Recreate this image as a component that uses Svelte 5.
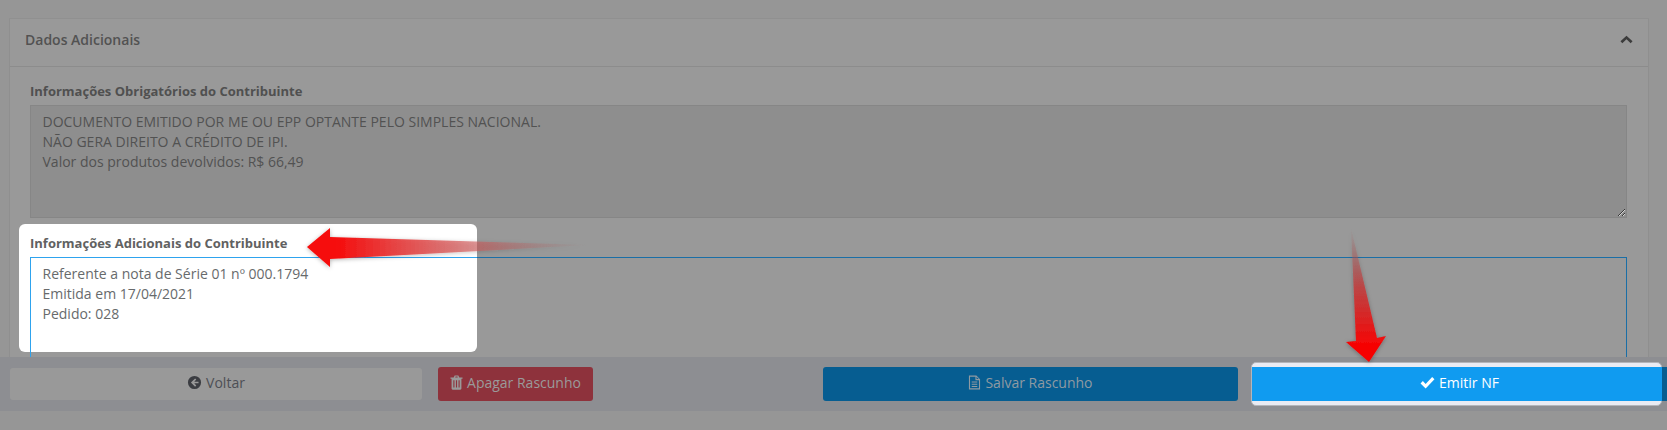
<script>
    const obrigatorias = [
        "DOCUMENTO EMITIDO POR ME OU EPP OPTANTE PELO SIMPLES NACIONAL.",
        "NÃO GERA DIREITO A CRÉDITO DE IPI.",
        "Valor dos produtos devolvidos: R$ 66,49",
    ];
    const adicionais = [
        "Referente a nota de Série 01 nº 000.1794",
        "Emitida em 17/04/2021",
        "Pedido: 028",
    ];
</script>

<div class="page">
    <section class="card">
        <header class="card-head">
            <span class="card-title">Dados Adicionais</span>
            <svg class="chevron" viewBox="0 0 14 9" width="13" height="9">
                <path d="M7 0.5 L13.5 6.5 L11.5 8.5 L7 4.2 L2.5 8.5 L0.5 6.5 Z" />
            </svg>
        </header>
        <div class="card-body">
            <div class="field">
                <div class="label">Informações Obrigatórios do Contribuinte</div>
                <div class="area disabled">
                    {#each obrigatorias as line}
                        <div>{line}</div>
                    {/each}
                </div>
            </div>
            <div class="field highlighted">
                <div class="spot"></div>
                <div class="label">Informações Adicionais do Contribuinte</div>
                <div class="area focused">
                    {#each adicionais as line}
                        <div>{line}</div>
                    {/each}
                </div>
            </div>
        </div>
    </section>

    <footer class="actions">
        <button class="btn voltar">
            <svg class="icon" viewBox="0 0 16 16" width="15" height="15">
                <path fill-rule="evenodd" d="M8 1a7 7 0 1 1 0 14A7 7 0 0 1 8 1Zm.6 2.6L4.2 8l4.4 4.4 1.3-1.3-2.2-2.2h4.6V7.1H7.7l2.2-2.2Z" />
            </svg>
            Voltar
        </button>
        <button class="btn apagar">
            <svg class="icon" viewBox="0 0 14 16" width="13" height="15">
                <path fill-rule="evenodd" d="M5 0.5h4l1 2h3.5v1.5h-1.2v10.5a1.2 1.2 0 0 1-1.2 1.2H2.9a1.2 1.2 0 0 1-1.2-1.2V4H0.5V2.5H4ZM5.6 2.5h2.8L8 1.6H6ZM3.6 5.5v8h1.2v-8Zm2.8 0v8h1.2v-8Zm2.8 0v8h1.2v-8Z" />
            </svg>
            Apagar Rascunho
        </button>
        <button class="btn salvar">
            <svg class="icon" viewBox="0 0 14 16" width="13" height="15">
                <path fill-rule="evenodd" d="M1 0.5h8l4 4v11H1ZM2.2 1.7v12.6h9.6V5.5H8V1.7ZM9.2 2v2.3h2.3ZM4 7h6v1.1H4Zm0 2.4h6v1.1H4Zm0 2.4h6v1.1H4Z" />
            </svg>
            Salvar Rascunho
        </button>
        <div class="emitir-wrap">
            <div class="emitir-ring"></div>
            <button class="btn emitir">
                <svg class="icon" viewBox="0 0 16 14" width="15" height="13">
                    <path d="M6 13.5 L0.5 8 L3 5.5 L6 8.5 L13 1 L15.5 3.5 Z" />
                </svg>
                Emitir NF
            </button>
        </div>
    </footer>

    <svg class="arrows" viewBox="0 0 1667 430" width="1667" height="430">
        <defs>
            <linearGradient id="fadeLeft" gradientUnits="userSpaceOnUse" x1="335" y1="0" x2="589" y2="0">
                <stop offset="0" stop-color="#f60a0a" />
                <stop offset="0.35" stop-color="#e04a4a" stop-opacity="0.85" />
                <stop offset="1" stop-color="#a06a6a" stop-opacity="0" />
            </linearGradient>
            <linearGradient id="fadeDown" gradientUnits="userSpaceOnUse" x1="0" y1="228" x2="0" y2="345">
                <stop offset="0" stop-color="#a06060" stop-opacity="0" />
                <stop offset="0.5" stop-color="#c04040" stop-opacity="0.9" />
                <stop offset="1" stop-color="#f60404" />
            </linearGradient>
            <filter id="soft" x="-20%" y="-20%" width="140%" height="140%">
                <feDropShadow dx="0" dy="1" stdDeviation="2" flood-color="#000" flood-opacity="0.3" />
            </filter>
        </defs>
        <path filter="url(#soft)" fill="url(#fadeLeft)" d="M307 247 L330 228 L330 237 L589 245 L330 259 L330 267 Z" />
        <path filter="url(#soft)" fill="url(#fadeDown)" d="M1351 228 L1377 338 L1386 336 L1369 362 L1346 342 L1356 341 Z" />
    </svg>
</div>

<style>
    :global(body) {
        margin: 0;
        background: #969696;
    }

    .page {
        position: relative;
        isolation: isolate;
        width: 1667px;
        height: 430px;
        padding: 18px 18px 0 9px;
        box-sizing: border-box;
        overflow: hidden;
        background: #969696;
        font-family: "Open Sans", "Noto Sans", sans-serif;
        font-size: 14px;
        color: #4a4a4a;
    }

    .card {
        height: 370px;
        background: #999;
        border-left: 1px solid #8f8f8f;
        border-right: 1px solid #8f8f8f;
        border-top: 1px solid #909090;
        overflow: hidden;
        box-sizing: border-box;
    }

    .card-head {
        display: flex;
        align-items: center;
        justify-content: space-between;
        height: 48px;
        padding: 0 15px 6px 15px;
        border-bottom: 1px solid #8c8c8c;
        box-sizing: border-box;
    }

    .card-title {
        font-size: 14px;
        font-weight: 600;
        color: #525252;
    }

    .chevron {
        fill: #3c3c3c;
    }

    .card-body {
        display: flex;
        flex-direction: column;
        gap: 6px;
        padding: 16px 21px 0 20px;
        position: relative;
    }

    .label {
        position: relative;
        z-index: 1;
        height: 22px;
        line-height: 17px;
        font-size: 13px;
        font-weight: 700;
        color: #505050;
    }

    .area {
        position: relative;
        z-index: 1;
        padding: 6px 11.5px;
        line-height: 20px;
        box-sizing: border-box;
    }

    .disabled {
        height: 113px;
        background: #8e8e8e;
        border: 1px solid #868686;
        color: #525252;
        resize: vertical;
        overflow: auto;
    }

    .field.highlighted {
        position: relative;
        padding-top: 11px;
    }

    .spot {
        position: absolute;
        left: -11px;
        top: 0;
        width: 458px;
        height: 128px;
        border-radius: 6px;
        background: #fff;
    }

    .spot::after {
        content: "";
        position: absolute;
        left: 11px;
        right: 0;
        top: 33px;
        height: 1px;
        z-index: 2;
        background: #2ea3ee;
    }

    .highlighted .label {
        color: #616161;
    }

    .focused {
        height: 170px;
        border: 1px solid #1a6ea6;
        border-left-color: #2ea3ee;
        color: #676a6c;
    }

    .actions {
        position: absolute;
        left: 0;
        right: 0;
        top: 357px;
        height: 54px;
        display: flex;
        align-items: center;
        padding-left: 10px;
        box-sizing: border-box;
        background: #8d8e92;
        z-index: 2;
    }

    .btn {
        display: flex;
        align-items: center;
        justify-content: center;
        gap: 4px;
        height: 34px;
        padding: 0 0 3px;
        border: none;
        border-radius: 3px;
        font-family: inherit;
        font-size: 14px;
    }

    .icon {
        fill: currentColor;
    }

    .voltar {
        width: 412px;
        height: 32px;
        background: #999;
        color: #4d4f55;
    }

    .voltar .icon {
        fill: #3b3d42;
    }

    .apagar {
        width: 155px;
        margin-left: 16px;
        background: #8e323c;
        color: #9a9a9a;
    }

    .salvar {
        width: 415px;
        margin-left: 230px;
        background: #065d91;
        color: #8f9aa2;
    }

    .emitir-wrap {
        position: relative;
        width: 415px;
        margin-left: 14px;
    }

    .emitir-ring {
        position: absolute;
        left: -1px;
        right: 5px;
        top: -5px;
        bottom: -5px;
        border-radius: 5px;
        background: #e9ebf3;
        border: 1px solid #b4b5ba;
        box-sizing: border-box;
    }

    .emitir {
        position: relative;
        width: 100%;
        border-radius: 0;
        color: #fff;
        background: linear-gradient(to right, #109bf0 calc(100% - 5px), #065d91 0);
    }

    .arrows {
        position: absolute;
        left: 0;
        top: 0;
        z-index: 3;
        pointer-events: none;
    }
</style>
